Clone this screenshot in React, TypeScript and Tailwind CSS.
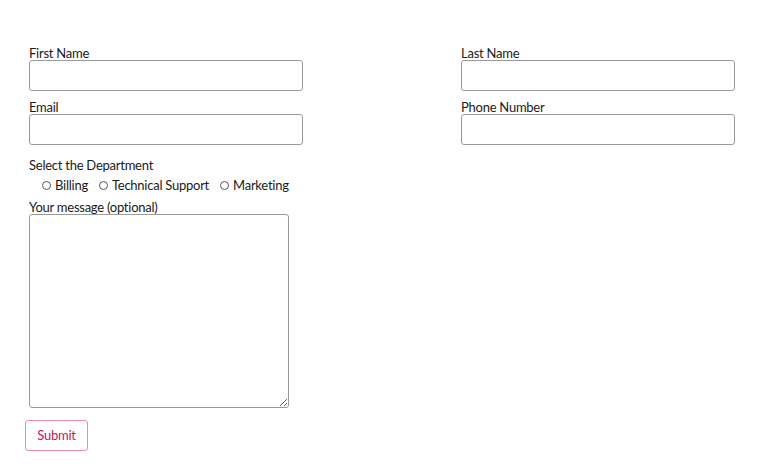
import { useState } from 'react';

const departments = ['Billing', 'Technical Support', 'Marketing'];

function Field({ label }: { label: string }) {
  return (
    <div className="flex flex-col">
      <label className="h-[14px] leading-[14px]">{label}</label>
      <input
        type="text"
        className="h-[31px] w-[274px] rounded-[3px] border border-[#9a9a9a] bg-white outline-none"
      />
    </div>
  );
}

export default function App() {
  const [dept, setDept] = useState('');

  return (
    <div
      className="min-h-[475px] w-[760px] bg-white pl-[29px] pt-[46px] text-[13px] tracking-[-0.25px] text-[#1a1a1a]"
      style={{ fontFamily: 'Lato, "Noto Sans", sans-serif' }}
    >
      <form onSubmit={(e) => e.preventDefault()}>
        {/* Name / contact grid */}
        <div className="grid grid-cols-[432px_274px] gap-y-[9px]">
          <Field label="First Name" />
          <Field label="Last Name" />
          <Field label="Email" />
          <Field label="Phone Number" />
        </div>

        {/* Department */}
        <div className="mt-[13px] leading-[14px]">Select the Department</div>
        <div className="mt-[6px] flex items-center gap-[11px] pl-[13px] leading-[14px]">
          {departments.map((d) => (
            <label key={d} className="flex items-center gap-[4px]">
              <input
                type="radio"
                name="department"
                checked={dept === d}
                onChange={() => setDept(d)}
                className="h-[9px] w-[9px] appearance-none rounded-full border border-[#555] bg-white checked:bg-[#555]"
              />
              <span>{d}</span>
            </label>
          ))}
        </div>

        {/* Message */}
        <label className="mt-[9px] block h-[13px] leading-[13px]">Your message (optional)</label>
        <textarea className="block h-[194px] w-[260px] rounded-[3px] border border-[#9a9a9a] outline-none" />

        <button
          type="submit"
          className="-ml-[4px] mt-[12px] h-[31px] w-[63px] rounded-[3px] border border-[#f08aa8] bg-white text-[13px] text-[#c2185b]"
        >
          Submit
        </button>
      </form>
    </div>
  );
}
